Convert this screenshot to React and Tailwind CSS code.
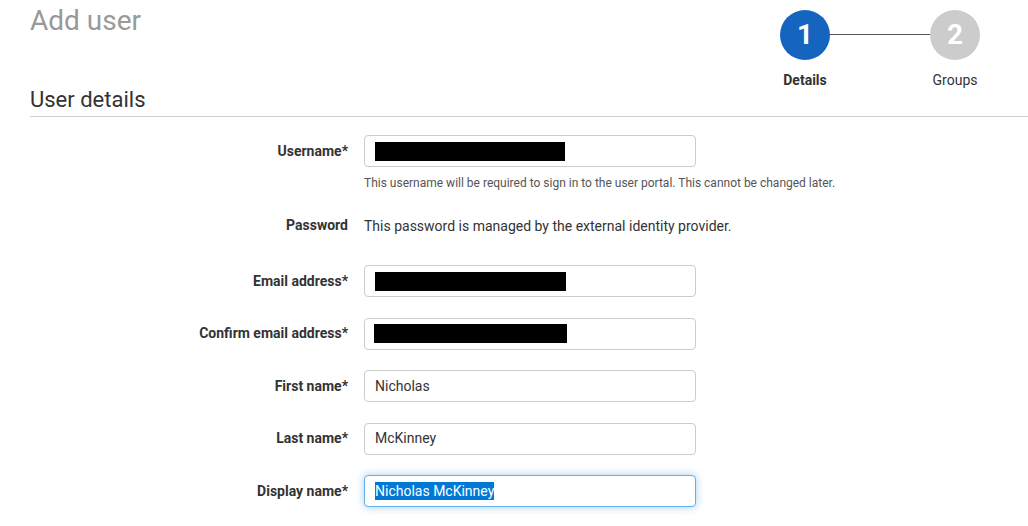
import React from 'react';

const font = { fontFamily: 'Roboto, "Liberation Sans", sans-serif' };

function Field({ label, children, focus }) {
  return (
    <div className="flex items-center">
      <div className="w-[318px] text-right text-[14px] font-bold text-[#333]">{label}</div>
      <div
        className={`ml-[16px] flex h-[32px] w-[332px] items-center rounded-[4px] border bg-white px-[10px] text-[14px] text-[#333] ${
          focus ? 'border-[#66afe9] shadow-[0_0_8px_rgba(102,175,233,0.6)]' : 'border-[#ccc]'
        }`}
      >
        {children}
      </div>
    </div>
  );
}

function Redacted({ w }) {
  return <div className="h-[19px] bg-black" style={{ width: w }} />;
}

export default function App() {
  return (
    <div className="min-h-screen bg-white pl-[30px]" style={font}>
      <div className="flex items-start justify-between border-b border-[#ccc]">
        <div>
          <h1 className="pt-[3px] text-[28px] leading-[36px] text-[#999]">Add user</h1>
          <h2 className="mt-[47px] pb-[2px] text-[22px] leading-[28px] text-[#333]">User details</h2>
        </div>
        <div className="mr-[48px] mt-[10px] flex items-start">
          <div className="flex w-[50px] flex-col items-center">
            <div className="flex h-[50px] w-[50px] items-center justify-center rounded-full bg-[#1565c0] text-[28px] font-bold text-white">1</div>
            <div className="mt-[10px] whitespace-nowrap text-[14px] font-bold text-[#333]">Details</div>
          </div>
          <div className="mt-[24px] h-px w-[100px] bg-[#555]" />
          <div className="flex w-[50px] flex-col items-center">
            <div className="flex h-[50px] w-[50px] items-center justify-center rounded-full bg-[#ccc] text-[28px] font-bold text-white">2</div>
            <div className="mt-[10px] whitespace-nowrap text-[14px] text-[#333]">Groups</div>
          </div>
        </div>
      </div>

      <div className="mt-[18px]">
        <Field label="Username*">
          <Redacted w={190} />
        </Field>
        <div className="ml-[334px] mt-[8px] text-[12px] leading-[16px] text-[#555]">
          This username will be required to sign in to the user portal. This cannot be changed later.
        </div>
        <div className="mt-[24px] flex items-center">
          <div className="w-[318px] text-right text-[14px] font-bold text-[#333]">Password</div>
          <div className="ml-[16px] text-[14px] leading-[20px] text-[#333]">This password is managed by the external identity provider.</div>
        </div>
        <div className="mt-[29px] flex flex-col gap-[20.5px]">
          <Field label="Email address*">
            <Redacted w={191} />
          </Field>
          <Field label="Confirm email address*">
            <div className="-ml-[1px]"><Redacted w={193} /></div>
          </Field>
          <Field label="First name*">Nicholas</Field>
          <Field label="Last name*">McKinney</Field>
          <Field label="Display name*" focus>
            <span className="bg-[#0078d7] leading-[18px] text-white">Nicholas McKinney</span>
          </Field>
        </div>
      </div>
    </div>
  );
}
